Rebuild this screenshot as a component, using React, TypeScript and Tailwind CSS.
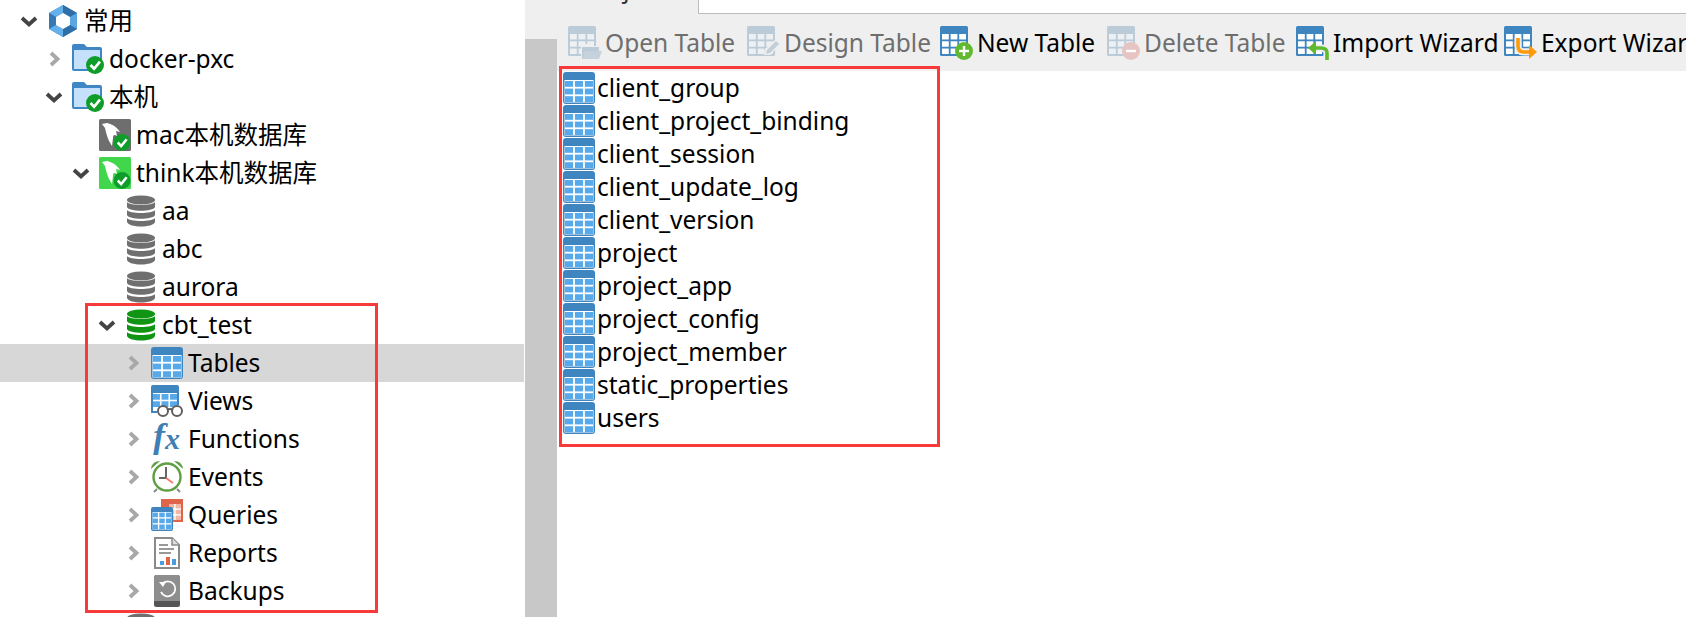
import React from "react";

const check = (cx: number, cy: number, r: number, fill = "#0f9d2a") => (
  <g>
    <circle cx={cx} cy={cy} r={r} fill={fill} />
    <polyline
      points={`${cx - r * 0.5},${cy} ${cx - r * 0.1},${cy + r * 0.42} ${cx + r * 0.55},${cy - r * 0.38}`}
      fill="none"
      stroke="#fff"
      strokeWidth={r * 0.3}
    />
  </g>
);

function Chevron({ open }: { open?: boolean }) {
  if (open) {
    return (
      <svg width="18" height="16" viewBox="0 0 18 16" className="-ml-px shrink-0">
        <polyline points="2,5 9,11.5 16,5" fill="none" stroke="#444444" strokeWidth="3.8" />
      </svg>
    );
  }
  return (
    <svg width="16" height="16" viewBox="0 0 16 16" className="shrink-0">
      <polyline points="5,2 11.5,8 5,14" fill="none" stroke="#a8a8a8" strokeWidth="3.8" />
    </svg>
  );
}

function Logo() {
  return (
    <svg width="32" height="32" viewBox="0 0 32 32">
      <polygon points="16,0 30,8 30,24 16,32 2,24 2,8" fill="#3f86c4" />
      <polygon points="16,0 30,8 23,12 16,8" fill="#2f6fa8" />
      <polygon points="2,8 16,0 16,8 9,12" fill="#64b0ea" />
      <polygon points="30,8 30,24 23,20 23,12" fill="#5aa6e2" />
      <polygon points="2,8 9,12 9,20 2,24" fill="#3478b4" />
      <polygon points="2,24 9,20 16,24 16,32" fill="#64b0ea" />
      <polygon points="30,24 16,32 16,24 23,20" fill="#2f6fa8" />
      <polygon points="16,8 23,12 23,20 16,24 9,20 9,12" fill="#fff" />
    </svg>
  );
}

function FolderIcon() {
  return (
    <svg width="32" height="30" viewBox="0 0 32 30">
      <path d="M2 0 H12 L15 3 H28 Q30 3 30 5 V25 Q30 27 28 27 H2 Q0 27 0 25 V2 Q0 0 2 0 Z" fill="#3f86c4" />
      <rect x="2" y="6" width="26" height="19" fill="#c4e0fa" />
      {check(23, 21, 9)}
    </svg>
  );
}

function MysqlIcon({ color, badge }: { color: string; badge: string }) {
  return (
    <svg width="32" height="32" viewBox="0 0 32 32">
      <rect width="32" height="32" rx="1.5" fill={color} />
      <path d="M3 5 L8 4 C13 5 18 8 21 13 L17 12 L18 17 C15 15 14 16 14 19 L13 27 L10 22 C8 18 7 13 6 9 Z" fill="#fff" />
      {check(23, 23.5, 8.5, badge)}
    </svg>
  );
}

function DbIcon({ color = "#6f6f6f" }: { color?: string }) {
  return (
    <svg width="30" height="32" viewBox="0 0 30 32">
      <ellipse cx="15" cy="5" rx="14" ry="4.5" fill={color} />
      <path d="M1 7 C3 11 27 11 29 7 V12 C27 17 3 17 1 12 Z" fill={color} />
      <path d="M1 15 C3 19 27 19 29 15 V20 C27 25 3 25 1 20 Z" fill={color} />
      <path d="M1 23 C3 27 27 27 29 23 V27 C27 33 3 33 1 27 Z" fill={color} />
    </svg>
  );
}

function grid(x: number, y: number, w: number, h: number, cols: number, rows: number, gap: number, fill: string) {
  const cw = (w - gap * (cols - 1)) / cols;
  const ch = (h - gap * (rows - 1)) / rows;
  const out: React.ReactElement[] = [];
  for (let r = 0; r < rows; r++) {
    for (let c = 0; c < cols; c++) {
      out.push(<rect key={`${r}-${c}`} x={x + c * (cw + gap)} y={y + r * (ch + gap)} width={cw} height={ch} fill={fill} />);
    }
  }
  return out;
}

function TableIcon() {
  return (
    <svg width="32" height="32" viewBox="0 0 32 32" className="shrink-0">
      <rect width="32" height="32" rx="3" fill="#3f85c0" />
      <rect x="1.5" y="8" width="29" height="22.5" fill="#fff" />
      {grid(2, 9, 28, 21, 3, 3, 1.8, "#58a9ea")}
    </svg>
  );
}

function ViewsIcon() {
  return (
    <svg width="32" height="32" viewBox="0 0 32 32">
      <path d="M2 0 H26 Q28 0 28 2 V20 H2 V28 H0 V2 Q0 0 2 0 Z" fill="#3f85c0" />
      <rect x="2" y="8" width="24" height="14" fill="#fff" />
      {grid(2, 9, 24, 13, 3, 2, 1.6, "#58a9ea")}
      <rect x="0" y="26" width="6" height="2" fill="#3f85c0" />
      <circle cx="12" cy="26" r="5" fill="#fff" stroke="#5f5f5f" strokeWidth="2" />
      <circle cx="26" cy="26" r="5" fill="#fff" stroke="#5f5f5f" strokeWidth="2" />
      <path d="M16 25 Q19 23 22 25" fill="none" stroke="#5f5f5f" strokeWidth="2" />
    </svg>
  );
}

function FxIcon() {
  return (
    <svg width="32" height="32" viewBox="0 0 32 32">
      <text x="2" y="25" fontFamily="'Liberation Serif', serif" fontStyle="italic" fontWeight="700" fontSize="36" fill="#3f7fb3">
        f
      </text>
      <text x="14" y="26" fontFamily="'Liberation Serif', serif" fontStyle="italic" fontWeight="700" fontSize="30" fill="#3f7fb3">
        x
      </text>
    </svg>
  );
}

function ClockIcon() {
  return (
    <svg width="32" height="32" viewBox="0 0 32 32">
      <path d="M0 8 Q1 0 9 0 Z" fill="#5f9e42" />
      <path d="M32 8 Q31 0 23 0 Z" fill="#5f9e42" />
      <line x1="6" y1="28" x2="3" y2="31" stroke="#888" strokeWidth="2" />
      <line x1="26" y1="28" x2="29" y2="31" stroke="#888" strokeWidth="2" />
      <circle cx="16" cy="16" r="13.5" fill="#fff" stroke="#5f9e42" strokeWidth="2.4" />
      <line x1="15" y1="6" x2="15" y2="17" stroke="#555" strokeWidth="1.8" />
      <line x1="8" y1="17" x2="15" y2="17" stroke="#555" strokeWidth="1.8" />
      <line x1="15" y1="17" x2="22" y2="22" stroke="#ef7a6c" strokeWidth="1.8" />
    </svg>
  );
}

function QueriesIcon() {
  return (
    <svg width="32" height="32" viewBox="0 0 32 32">
      <rect x="10" y="0" width="22" height="23" fill="#e0644a" />
      <rect x="18" y="5" width="12" height="16" fill="#fff" />
      {grid(18, 5, 12, 16, 2, 3, 1.4, "#f0b7a6")}
      <rect x="0" y="8" width="22" height="24" rx="2" fill="#3f85c0" />
      <rect x="1.5" y="13" width="19" height="17.5" fill="#fff" />
      {grid(1.5, 13.6, 19, 16.5, 3, 3, 1.3, "#58a9ea")}
    </svg>
  );
}

function ReportsIcon() {
  return (
    <svg width="26" height="32" viewBox="0 0 26 32">
      <path d="M1 1 H18 L25 8 V31 H1 Z" fill="#fff" stroke="#8a8a8a" strokeWidth="2" />
      <path d="M18 1 V8 H25" fill="#ddd" stroke="#8a8a8a" strokeWidth="1.5" />
      <rect x="5" y="7" width="9" height="2" fill="#999" />
      <rect x="5" y="11" width="15" height="2" fill="#999" />
      <rect x="5" y="15" width="12" height="2" fill="#999" />
      <rect x="6" y="24" width="4" height="4" fill="#4b9be0" />
      <rect x="12" y="20" width="4" height="8" fill="#e0644a" />
      <rect x="18" y="22" width="4" height="6" fill="#4b9be0" />
    </svg>
  );
}

function BackupsIcon() {
  return (
    <svg width="26" height="32" viewBox="0 0 26 32">
      <rect width="26" height="32" rx="2.5" fill="#555" />
      <path d="M2.5 0 H23.5 Q26 0 26 2.5 V26 H0 V2.5 Q0 0 2.5 0 Z" fill="#8e8e8e" />
      <path d="M8 9 A7.5 7.5 0 1 1 7 17" fill="none" stroke="#fff" strokeWidth="1.8" />
      <polygon points="5,7 12,7 9,12" fill="#fff" />
    </svg>
  );
}

function BarIcon({ kind, disabled }: { kind: string; disabled?: boolean }) {
  const blue = disabled ? "#bccbd8" : "#3f85c0";
  const cell = disabled ? "#eef1f4" : "#fff";
  return (
    <svg width="34" height="34" viewBox="0 0 34 34" className="shrink-0">
      <rect x="0" y="0" width="28" height="30" rx="1.5" fill={blue} />
      {grid(2, 8, 24, 20, 3, 3, 1.8, cell)}
      {kind === "open" && (
        <g>
          <path d="M13 18 H20 L22 20 H32 V32 H13 Z" fill="#efefef" />
          <path d="M14 21 H31 V33 H14 Z" fill="#bccbd8" />
          <path d="M17 25 H34 L31 33 H14 Z" fill="#c5d1dc" />
        </g>
      )}
      {kind === "design" && (
        <g>
          <polygon points="17,29 18,23 29,13 34,18 23,29" fill="#efefef" />
          <polygon points="19,28 20,24 29,15 32,18 23,27" fill="#c3ced8" />
        </g>
      )}
      {kind === "new" && (
        <g>
          <circle cx="24" cy="25" r="9" fill="#60b92f" />
          <rect x="19" y="23.8" width="10" height="2.4" fill="#fff" />
          <rect x="22.8" y="20" width="2.4" height="10" fill="#fff" />
        </g>
      )}
      {kind === "delete" && (
        <g>
          <circle cx="24" cy="25" r="9" fill="#e6c4c2" />
          <rect x="19" y="23.8" width="10" height="2.4" fill="#fff" />
        </g>
      )}
      {kind === "import" && (
        <g>
          <path d="M31 34 V27 Q31 22 25 22 H19" fill="none" stroke="#efefef" strokeWidth="7" />
          <path d="M31 34 V27 Q31 22 25 22 H19" fill="none" stroke="#60b92f" strokeWidth="3.6" />
          <polygon points="12,22 20,15 20,29" fill="#60b92f" />
        </g>
      )}
      {kind === "export" && (
        <g>
          <path d="M14 12 V20 Q14 26 20 26 H26" fill="none" stroke="#efefef" strokeWidth="7" />
          <path d="M14 12 V20 Q14 26 20 26 H26" fill="none" stroke="#ff9a0a" strokeWidth="3.6" />
          <polygon points="33,26 25,19 25,33" fill="#ff9a0a" />
        </g>
      )}
    </svg>
  );
}

interface Row {
  level: number;
  label: string;
  icon: React.ReactNode;
  arrow?: "open" | "closed";
  selected?: boolean;
}

const rows: Row[] = [
  { level: 0, label: "常用", icon: <Logo />, arrow: "open" },
  { level: 1, label: "docker-pxc", icon: <FolderIcon />, arrow: "closed" },
  { level: 1, label: "本机", icon: <FolderIcon />, arrow: "open" },
  { level: 2, label: "mac本机数据库", icon: <MysqlIcon color="#6e6e6e" badge="#0f9d2a" /> },
  { level: 2, label: "think本机数据库", icon: <MysqlIcon color="#41d64c" badge="#0f9d2a" />, arrow: "open" },
  { level: 3, label: "aa", icon: <DbIcon /> },
  { level: 3, label: "abc", icon: <DbIcon /> },
  { level: 3, label: "aurora", icon: <DbIcon /> },
  { level: 3, label: "cbt_test", icon: <DbIcon color="#0f9414" />, arrow: "open" },
  { level: 4, label: "Tables", icon: <TableIcon />, arrow: "closed", selected: true },
  { level: 4, label: "Views", icon: <ViewsIcon />, arrow: "closed" },
  { level: 4, label: "Functions", icon: <FxIcon />, arrow: "closed" },
  { level: 4, label: "Events", icon: <ClockIcon />, arrow: "closed" },
  { level: 4, label: "Queries", icon: <QueriesIcon />, arrow: "closed" },
  { level: 4, label: "Reports", icon: <ReportsIcon />, arrow: "closed" },
  { level: 4, label: "Backups", icon: <BackupsIcon />, arrow: "closed" },
  { level: 3, label: "", icon: <DbIcon /> },
];

const indent = ["pl-[21px]", "pl-[46px]", "pl-[73px]", "pl-[99px]", "pl-[125px]"];

const tools = [
  { kind: "open", label: "Open Table", disabled: true, width: "w-[132px]" },
  { kind: "design", label: "Design Table", disabled: true, width: "w-[146px]" },
  { kind: "new", label: "New Table", width: "w-[120px]" },
  { kind: "delete", label: "Delete Table", disabled: true, width: "w-[142px]" },
  { kind: "import", label: "Import Wizard", width: "w-[161px]" },
  { kind: "export", label: "Export Wizard", width: "w-[170px]" },
];

const tables = [
  "client_group",
  "client_project_binding",
  "client_session",
  "client_update_log",
  "client_version",
  "project",
  "project_app",
  "project_config",
  "project_member",
  "static_properties",
  "users",
];

export default function App() {
  return (
    <div className="relative flex h-[617px] w-[1686px] overflow-hidden bg-white font-['Noto_Sans','Noto_Sans_CJK_SC',sans-serif] text-[24.5px] text-black">
      <div className="w-[525px] shrink-0 pt-[2px]">
        {rows.map((row, i) => (
          <div key={i} className={`flex h-[38px] items-center ${indent[row.level]} ${row.selected ? "mr-px bg-[#d7d7d7]" : ""}`}>
            <div className="flex w-[26px] shrink-0 items-center">
              {row.arrow && <Chevron open={row.arrow === "open"} />}
            </div>
            <div className="flex w-[32px] shrink-0 justify-center">{row.icon}</div>
            <span className="ml-[5px] whitespace-nowrap pt-px leading-none">{row.label}</span>
          </div>
        ))}
      </div>

      <div className="flex min-w-0 flex-1 flex-col">
        <div className="flex h-[14px] shrink-0">
          <div className="relative w-[173px] overflow-hidden bg-[#efefef]">
            <span className="absolute bottom-[13px] left-[64px] leading-none text-[#333]">Objects</span>
          </div>
          <div className="flex-1 border-b border-l border-[#bbbbbb] bg-white" />
        </div>
        <div className="flex min-h-0 flex-1">
          <div className="flex w-[32px] shrink-0 flex-col">
            <div className="h-[25px] bg-[#efefef]" />
            <div className="flex-1 bg-[#c8c8c8]" />
          </div>
          <div className="min-w-0 flex-1">
            <div className="flex h-[57px] items-center gap-[10px] overflow-hidden whitespace-nowrap bg-[#efefef] pl-[11px]">
              {tools.map((t) => (
                <div key={t.kind} className={`flex shrink-0 items-center gap-[3px] ${t.disabled ? "text-[#6e6e6e]" : "text-black"}`}>
                  <BarIcon kind={t.kind} disabled={t.disabled} />
                  <span className={`pt-[2px] leading-none ${t.width}`}>{t.label}</span>
                </div>
              ))}
            </div>
            <div className="pl-[6px]">
              {tables.map((t) => (
                <div key={t} className="flex h-[33px] items-center gap-[2px]">
                  <TableIcon />
                  <span className="pt-[2px] leading-none">{t}</span>
                </div>
              ))}
            </div>
          </div>
        </div>
      </div>

      <div className="absolute left-[85px] top-[303px] h-[310px] w-[293px] border-[3px] border-[#f83a3a]" />
      <div className="absolute left-[559px] top-[66px] h-[381px] w-[381px] border-[3px] border-[#f83a3a]" />
    </div>
  );
}
